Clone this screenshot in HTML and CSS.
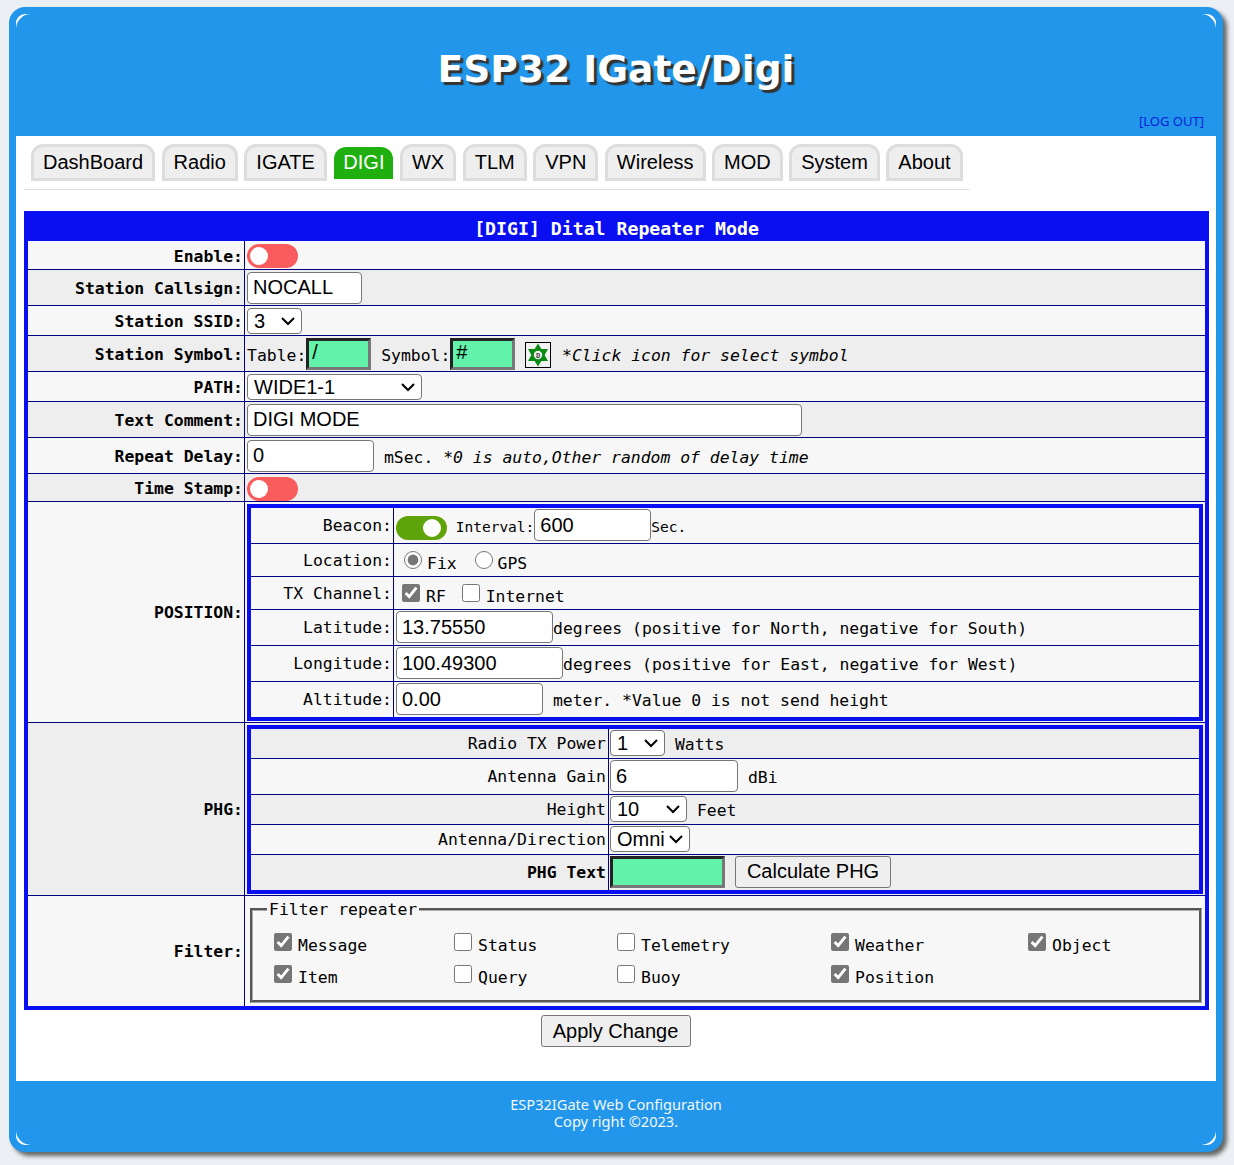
FILE: index.html
```html
<!DOCTYPE html>
<html lang="en">
<head>
  <meta charset="UTF-8" />
  <title>ESP32 IGate/Digi</title>
  <link rel="stylesheet" href="styles.css">
</head>
<body>

<div id="page">
  <header id="top">
    <h1>ESP32 IGate/Digi</h1>
    <a class="logout" href="#">[LOG OUT]</a>
  </header>

  <main id="content">
    <nav class="tabs">
      <a href="#">DashBoard</a>
      <a href="#">Radio</a>
      <a href="#">IGATE</a>
      <a href="#" class="active">DIGI</a>
      <a href="#">WX</a>
      <a href="#">TLM</a>
      <a href="#">VPN</a>
      <a href="#">Wireless</a>
      <a href="#">MOD</a>
      <a href="#">System</a>
      <a href="#">About</a>
    </nav>

    <table class="form main">
      <colgroup><col class="col-label"><col></colgroup>
      <tr class="title"><th colspan="2">[DIGI] Dital Repeater Mode</th></tr>
      <tr class="r29"><td class="label">Enable:</td><td class="value"><span class="toggle off"></span></td></tr>
      <tr class="r36"><td class="label">Station Callsign:</td><td class="value"><input class="w115" type="text" value="NOCALL"></td></tr>
      <tr class="r30"><td class="label">Station SSID:</td><td class="value"><select class="w55"><option>3</option></select></td></tr>
      <tr class="r36"><td class="label">Station Symbol:</td><td class="value">Table:<input class="mint w65" type="text" value="/"> Symbol:<input class="mint w65" type="text" value="#"> <svg class="symbol" viewBox="0 0 26 26"><rect x="0.5" y="0.5" width="25" height="25" fill="#f2f2f2" stroke="#000"/><path d="M13 1.5l3.4 5.6h6.6L19.6 13l3.4 5.9h-6.6L13 24.5l-3.4-5.6H3L6.4 13 3 7.1h6.6z" fill="#0a8a12"/><circle cx="13" cy="13" r="4.2" fill="#eee"/><text class="symbol-d" x="13" y="15.5">D</text></svg> <em>*Click icon for select symbol</em></td></tr>
      <tr class="r30"><td class="label">PATH:</td><td class="value"><select class="w175"><option>WIDE1-1</option></select></td></tr>
      <tr class="r36"><td class="label">Text Comment:</td><td class="value"><input class="w555" type="text" value="DIGI MODE"></td></tr>
      <tr class="r36"><td class="label">Repeat Delay:</td><td class="value"><input class="w127" type="text" value="0"> mSec. <em>*0 is auto,Other random of delay time</em></td></tr>
      <tr class="r28"><td class="label">Time Stamp:</td><td class="value"><span class="toggle off"></span></td></tr>
      <tr class="r221">
        <td class="label">POSITION:</td>
        <td class="value nest">
          <table class="form inner pos">
            <tr class="r36"><td class="name">Beacon:</td><td class="value"><span class="toggle on inline"></span><small> Interval:</small><input class="w117" type="text" value="600"><small>Sec.</small></td></tr>
            <tr class="r33"><td class="name">Location:</td><td class="value picks"><input class="pick" type="radio" name="loc" checked>Fix <input class="pick" type="radio" name="loc">GPS</td></tr>
            <tr class="r33"><td class="name">TX Channel:</td><td class="value picks"><input class="tick" type="checkbox" checked>RF <input class="tick" type="checkbox">Internet</td></tr>
            <tr class="r36"><td class="name">Latitude:</td><td class="value"><input class="w157" type="text" value="13.75550">degrees (positive for North, negative for South)</td></tr>
            <tr class="r36"><td class="name">Longitude:</td><td class="value"><input class="w167" type="text" value="100.49300">degrees (positive for East, negative for West)</td></tr>
            <tr class="r35"><td class="name">Altitude:</td><td class="value"><input class="w147" type="text" value="0.00"> meter. *Value 0 is not send height</td></tr>
          </table>
        </td>
      </tr>
      <tr class="r173">
        <td class="label">PHG:</td>
        <td class="value nest">
          <table class="form inner phg">
            <tr class="r30"><td class="name">Radio TX Power</td><td class="value"><select class="w55"><option>1</option></select> Watts</td></tr>
            <tr class="r36"><td class="name">Antenna Gain</td><td class="value"><input class="w128" type="text" value="6"> dBi</td></tr>
            <tr class="r30"><td class="name">Height</td><td class="value"><select class="w77"><option>10</option></select> Feet</td></tr>
            <tr class="r30"><td class="name">Antenna/Direction</td><td class="value"><select class="w80"><option>Omni</option></select></td></tr>
            <tr class="r35"><td class="name strong">PHG Text</td><td class="value"><input class="mint w115" type="text"> <button class="btn calc" type="button">Calculate PHG</button></td></tr>
          </table>
        </td>
      </tr>
      <tr class="r110">
        <td class="label">Filter:</td>
        <td class="value top">
          <fieldset class="filter">
            <legend>Filter repeater</legend>
            <div class="filter-grid">
              <label><input type="checkbox" checked>Message</label>
              <label><input type="checkbox">Status</label>
              <label><input type="checkbox">Telemetry</label>
              <label><input type="checkbox" checked>Weather</label>
              <label><input type="checkbox" checked>Object</label>
              <label><input type="checkbox" checked>Item</label>
              <label><input type="checkbox">Query</label>
              <label><input type="checkbox">Buoy</label>
              <label><input type="checkbox" checked>Position</label>
            </div>
          </fieldset>
        </td>
      </tr>
    </table>

    <div class="apply"><button class="btn" type="button">Apply Change</button></div>
  </main>

  <footer id="bottom">
    ESP32IGate Web Configuration<br>
    Copy right &copy;2023.
  </footer>
</div>

</body>
</html>
```

FILE: styles.css
```css
* { box-sizing: border-box; }
body {
  margin: 0;
  padding: 7px 11px 13px 9px;
  background: #eceff4;
  font-family: "DejaVu Sans Mono", monospace;
  font-size: 16.42px;
  color: #000;
}
#page {
  background: #fff;
  border: 7px solid #2196eb;
  border-radius: 16px;
  box-shadow: 4px 4px 4px #666;
}

/* header */
#top {
  display: flex;
  flex-direction: column;
  height: 122px;
  background: #2196eb;
  border-radius: 15px 15px 0 0;
}
#top h1 {
  margin: 33px 0 0;
  text-align: center;
  font-family: "DejaVu Sans", sans-serif;
  font-size: 37.6px;
  line-height: 44px;
  color: #fff;
  text-shadow: 3px 3px 1px #333;
}
.logout {
  margin: 21px 12px 0 0;
  align-self: flex-end;
  font-family: "Noto Sans", sans-serif;
  font-size: 13px;
  line-height: 18px;
  color: #0a1fd6;
  text-decoration: none;
}

/* tabs */
#content { padding: 8px 7px 34px 8px; }
.tabs {
  display: flex;
  gap: 6.5px;
  width: 945px;
  height: 46px;
  padding-left: 7px;
  border-bottom: 1px solid #ddd;
  font-family: "Liberation Sans", sans-serif;
  font-size: 20px;
}
.tabs a {
  height: 37px;
  padding: 4px 9px 0;
  border: 3px solid #ddd;
  border-radius: 12px 12px 0 0;
  background: #eee;
  color: #000;
  text-decoration: none;
}
.tabs a.active {
  height: 32px;
  margin: 3px 0 0 1px;
  padding: 4px 9px 0;
  border: 0;
  background: #1fb00f;
  color: #fff;
}

/* tables */
.form {
  width: 100%;
  border-spacing: 0;
  border: 4px solid #0a0ff2;
  table-layout: fixed;
}
.form td { padding: 0; border-bottom: 1px solid #000080; vertical-align: middle; }
.form tr:nth-child(odd) td { background: #eee; }
.form tr:nth-child(even) td { background: #f7f7f7; }
.form tr:last-child > td { border-bottom: 0; }
.main { margin-top: 21px; }
.col-label { width: 217px; }
.title th {
  height: 26px;
  padding: 2px 0 0;
  background: #0a0ff2;
  color: #fff;
  font-size: 18.2px;
  line-height: 24px;
}
.label, .name {
  padding-right: 2px !important;
  text-align: right;
  border-right: 1px solid #000080;
  white-space: nowrap;
}
.label { padding: 2px 1px 0 0 !important; font-weight: bold; }
.r221 > .label, .r173 > .label, .r110 > .label { padding-top: 0 !important; }
.strong { font-weight: bold; }
.value { padding-left: 2px !important; white-space: nowrap; }
.nest { padding: 2px 2px 1px !important; }
.top { vertical-align: top !important; }
.pos .name { width: 143px; padding-right: 1px !important; }
.phg .name { width: 358px; }
.inner .value { padding-bottom: 2px !important; }
.inner .picks { padding: 4px 0 0 2px !important; }
.phg .value { padding-left: 1px !important; }

.r28 td { height: 28px; }
.r29 td { height: 29px; }
.r30 td { height: 30px; }
.r33 td { height: 33px; }
.r35 td { height: 35px; }
.r36 td { height: 36px; }
.r110 > td { height: 110px; }
.r173 > td { height: 173px; }
.r221 > td { height: 221px; }

/* form controls */
input[type="text"], select {
  height: 32px;
  padding: 0 5px;
  border: 1px solid #767676;
  border-radius: 4px;
  background: #fff;
  font-family: "Liberation Sans", sans-serif;
  font-size: 20px;
  color: #000;
}
.inner input[type="text"] { padding-top: 2px; vertical-align: -1px; }
select {
  height: 26px;
  padding: 0 6px;
  appearance: none;
  background: #fff url("data:image/svg+xml,%3Csvg xmlns='http://www.w3.org/2000/svg' width='14' height='10'%3E%3Cpath d='M1 2l6 6 6-6' fill='none' stroke='%23000' stroke-width='2'/%3E%3C/svg%3E") no-repeat right 6px center;
}
.w55 { width: 55px; }
.w65 { width: 65px; }
.w77 { width: 77px; }
.w80 { width: 80px; }
.w115 { width: 115px; }
.w117 { width: 117px; }
.w127 { width: 127px; }
.w128 { width: 128px; }
.w147 { width: 147px; }
.w157 { width: 157px; }
.w167 { width: 167px; }
.w175 { width: 175px; }
.w555 { width: 555px; }
input.mint {
  padding: 0 0 3px 3px;
  border: 3px solid;
  border-color: #222 #777 #777 #222;
  border-radius: 0;
  background: #62f2a9;
  font-size: 20px;
  vertical-align: 2px;
}
.phg input.mint { padding: 0; vertical-align: middle; }
.symbol { width: 26px; height: 26px; margin-right: 1px; vertical-align: -7px; }
.symbol-d { font-size: 7px; font-weight: bold; text-anchor: middle; fill: #444; }
small { font-size: 14.5px; }

.toggle {
  display: block;
  position: relative;
  width: 51px;
  height: 24px;
  border-radius: 12px;
  background: #f95c5c;
}
.toggle.off { margin-top: 2px; }
.toggle.on { background: #5fa30a; }
.toggle.inline { display: inline-block; vertical-align: -9px; }
.toggle::after {
  content: "";
  position: absolute;
  top: 3px;
  left: 3px;
  width: 18px;
  height: 18px;
  border-radius: 50%;
  background: #fff;
}
.toggle.on::after { left: 27px; }

input[type="radio"], input[type="checkbox"] {
  width: 18px;
  height: 18px;
  margin: 0 6px 1px 0;
  accent-color: #767676;
}
input.pick { margin: 0 5px 1px 8px; }
input.tick { margin-left: 6px; }

.filter {
  height: 103px;
  margin: 4px 3px 0 3px;
  padding: 0;
  border: 3px groove #aaa;
}
.filter legend { margin-left: 14px; padding: 2px 2px 0; font-size: 16.42px; line-height: 16px; }
.filter input[type="checkbox"] { margin-bottom: 3px; }
.filter-grid {
  display: grid;
  grid-template-columns: 180px 163px 214px 197px 1fr;
  grid-auto-rows: 32px;
  margin: 15px 0 0 21px;
}
.btn {
  height: 32px;
  padding: 0 11px;
  border: 1px solid #767676;
  border-radius: 3px;
  background: #efefef;
  font-family: "Liberation Sans", sans-serif;
  font-size: 20px;
  color: #000;
}
.calc { width: 156px; vertical-align: middle; }
.apply { margin-top: 5px; padding-right: 2px; text-align: center; }
.apply .btn { width: 150px; }

/* footer */
#bottom {
  height: 64px;
  padding-top: 15px;
  background: #2196eb;
  border-radius: 0 0 15px 15px;
  text-align: center;
  font-family: "Noto Sans", sans-serif;
  font-size: 14.6px;
  line-height: 17px;
  color: #f2f8fe;
}
```
